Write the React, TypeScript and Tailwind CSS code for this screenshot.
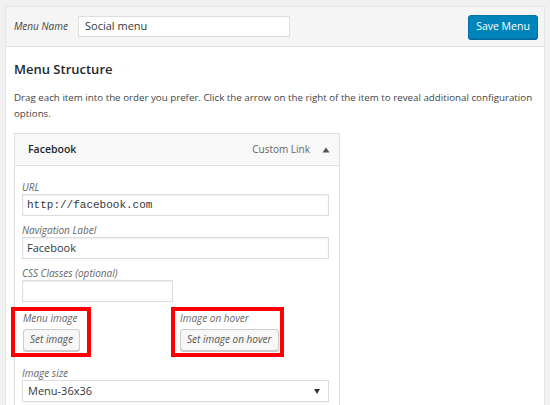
import React from 'react';

const font = { fontFamily: '"Open Sans", "Noto Sans", sans-serif' };

function Field({ label, value, mono, width = 'w-[307px]' }: { label: string; value?: string; mono?: boolean; width?: string }) {
  return (
    <div className="mb-[7px]">
      <div className="h-[14px] leading-[14px] text-[10px] italic text-[#666]">{label}</div>
      <div
        className={`${width} h-[22px] border border-[#ddd] bg-white shadow-[inset_0_1px_2px_rgba(0,0,0,0.07)] flex items-center px-[4px] text-[11px] text-[#32373c] ${
          mono ? 'font-["Liberation_Mono"] text-[11px]' : ''
        }`}
      >
        {value}
      </div>
    </div>
  );
}

function ImageButton({ label, text }: { label: string; text: string }) {
  return (
    <div className="h-[42px]">
      <div className="h-[14px] leading-[14px] text-[10px] italic text-[#666]">{label}</div>
      <div className="h-[22px] inline-flex items-center px-[6px] border border-[#ccc] rounded-[3px] bg-[#f7f7f7] shadow-[0_1px_0_#ccc] text-[10px] italic text-[#555]">
        {text}
      </div>
    </div>
  );
}

export default function App() {
  return (
    <div className="w-[550px] h-[405px] overflow-hidden bg-[#f1f1f1] pt-[6px] pl-[5px]" style={font}>
      <div className="w-[540px] h-[420px] border border-[#e5e5e5] bg-white">
        <div className="h-[40px] bg-[#f5f5f5] border-b border-[#dfdfdf] flex items-center pl-[8px] pr-[6px]">
          <span className="text-[10px] italic text-[#444] w-[64px]">Menu Name</span>
          <div className="w-[212px] h-[21px] border border-[#ddd] bg-white flex items-center px-[6px] text-[11px] text-[#32373c]">
            Social menu
          </div>
          <div className="ml-auto w-[70px] h-[24px] rounded-[3px] bg-[#0085ba] border border-[#0073aa] shadow-[0_1px_0_#006799] flex items-center justify-center text-[10.5px] text-white">
            Save Menu
          </div>
        </div>

        <div className="pl-[8px]">
          <h2 className="mt-[13px] text-[13px] font-semibold text-[#23282d] leading-[18px]">Menu Structure</h2>
          <p className="mt-[12px] text-[9.75px] leading-[16px] text-[#444] whitespace-nowrap">
            Drag each item into the order you prefer. Click the arrow on the right of the item to reveal additional configuration
            <br />
            options.
          </p>

          <div className="mt-[11px] w-[326px] border border-[#dfdfdf]">
            <div className="h-[32px] bg-[#f8f8f8] border-b border-[#dfdfdf] flex items-center pl-[13px] pr-[9px]">
              <span className="text-[10.5px] font-semibold text-[#23282d]">Facebook</span>
              <span className="ml-auto text-[10px] text-[#666]">Custom Link</span>
              <svg className="ml-[12px]" width="8" height="6" viewBox="0 0 8 6">
                <path d="M4 0.5 L7.5 5.5 L0.5 5.5 Z" fill="#555" />
              </svg>
            </div>
            <div className="pl-[7px] pt-[14px] pb-[20px]">
              <Field label="URL" value="http://facebook.com" mono />
              <Field label="Navigation Label" value="Facebook" />
              <Field label="CSS Classes (optional)" width="w-[151px]" />
              <div className="flex mt-[-2px] ml-[-11px]">
                <div className="w-[80px] h-[50px] border-4 border-[#ff0000] pl-[8px]">
                  <ImageButton label="Menu image" text="Set image" />
                </div>
                <div className="ml-[80px] w-[113px] h-[50px] border-4 border-[#ff0000] pl-[5px]">
                  <ImageButton label="Image on hover" text="Set image on hover" />
                </div>
              </div>
              <div className="mt-[9px]">
                <div className="h-[14px] leading-[14px] text-[10px] italic text-[#666]">Image size</div>
                <div className="w-[307px] h-[22px] border border-[#ddd] bg-white shadow-[0_1px_1px_rgba(0,0,0,0.04)] flex items-center pl-[5px] pr-[8px] text-[11px] text-[#32373c]">
                  Menu-36x36
                  <svg className="ml-auto" width="6" height="5" viewBox="0 0 6 5">
                    <path d="M0 0 L6 0 L3 5 Z" fill="#333" />
                  </svg>
                </div>
              </div>
            </div>
          </div>
        </div>
      </div>
    </div>
  );
}
